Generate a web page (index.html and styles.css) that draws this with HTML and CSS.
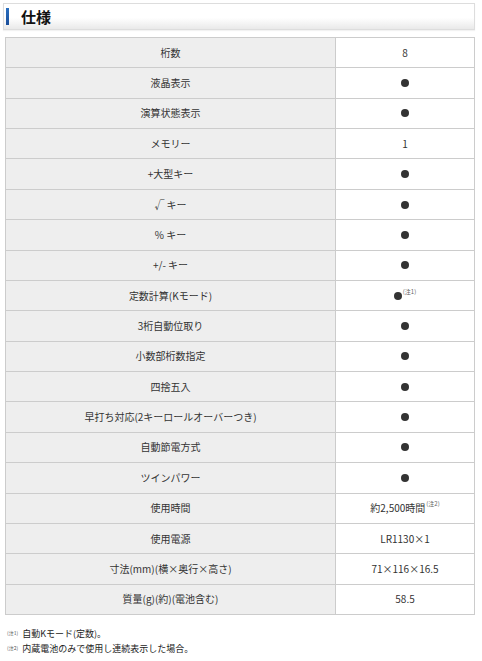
FILE: index.html
```html
<!DOCTYPE html>
<html lang="ja">
<head>
<meta charset="utf-8">
<link rel="stylesheet" href="styles.css">
</head>
<body>
<div class="page">
  <div class="heading"><span class="bar"></span><h2>仕様</h2></div>
  <div class="spec">
    <div class="k">桁数</div><div class="v">8</div>
    <div class="k">液晶表示</div><div class="v"><span class="dot"></span></div>
    <div class="k">演算状態表示</div><div class="v"><span class="dot"></span></div>
    <div class="k">メモリー</div><div class="v">1</div>
    <div class="k">+大型キー</div><div class="v"><span class="dot"></span></div>
    <div class="k">√ キー</div><div class="v"><span class="dot"></span></div>
    <div class="k">% キー</div><div class="v"><span class="dot"></span></div>
    <div class="k">+/- キー</div><div class="v"><span class="dot"></span></div>
    <div class="k">定数計算(Kモード)</div><div class="v"><span class="dot"></span><sup class="note">(注1)</sup></div>
    <div class="k">3桁自動位取り</div><div class="v"><span class="dot"></span></div>
    <div class="k">小数部桁数指定</div><div class="v"><span class="dot"></span></div>
    <div class="k">四捨五入</div><div class="v"><span class="dot"></span></div>
    <div class="k">早打ち対応(2キーロールオーバーつき)</div><div class="v"><span class="dot"></span></div>
    <div class="k">自動節電方式</div><div class="v"><span class="dot"></span></div>
    <div class="k">ツインパワー</div><div class="v"><span class="dot"></span></div>
    <div class="k">使用時間</div><div class="v">約2,500時間<sup class="note">(注2)</sup></div>
    <div class="k">使用電源</div><div class="v">LR1130×1</div>
    <div class="k">寸法(mm)(横×奥行×高さ)</div><div class="v">71×116×16.5</div>
    <div class="k">質量(g)(約)(電池含む)</div><div class="v">58.5</div>
  </div>
  <ul class="notes">
    <li><span class="mark">(注1)</span>自動Kモード(定数)。</li>
    <li><span class="mark">(注2)</span>内蔵電池のみで使用し連続表示した場合。</li>
  </ul>
</div>
</body>
</html>
```
FILE: styles.css
```css
* { box-sizing: border-box; }
html, body { margin: 0; padding: 0; background: #fff; }
body {
  font-family: "Noto Sans CJK JP", "Noto Sans", sans-serif;
  color: #333;
  font-size: 10px;
}
.page { padding: 3px 7px 0 3px; }
.heading {
  height: 27px;
  border: 1px solid #ddd;
  background: linear-gradient(#fff 0%, #fff 55%, #e9e9e9 100%);
  display: flex;
  align-items: center;
  padding-left: 2px;
  box-shadow: 0 1px 1px rgba(0,0,0,0.05);
}
.bar {
  width: 3px;
  height: 17px;
  background: linear-gradient(#2a6fc0, #1a4e9a);
  margin-right: 12px;
}
.heading h2 {
  margin: 0;
  font-size: 15px;
  font-weight: bold;
  color: #111;
  line-height: 1;
}
.spec {
  margin: 7px 0 0 2px;
  height: 578px;
  display: grid;
  grid-template-columns: 329px 1fr;
  grid-template-rows: repeat(19, 1fr);
  gap: 1px;
  background: #cccccc;
  border: 1px solid #cccccc;
}
.k, .v {
  display: flex;
  align-items: center;
  justify-content: center;
  line-height: 1;
}
.k { background: #eeeeee; }
.v { background: #ffffff; }
.dot {
  display: inline-block;
  width: 8px;
  height: 8px;
  border-radius: 50%;
  background: #333;
}
.note {
  font-size: 6px;
  color: #666;
  vertical-align: top;
  position: relative;
  top: -4px;
  margin-left: 1px;
}
.notes {
  list-style: none;
  margin: 11px 0 0 0;
  padding: 0 0 0 4px;
  font-size: 9px;
  line-height: 15px;
  color: #222;
}
.mark {
  font-size: 5px;
  color: #555;
  vertical-align: top;
  margin-right: 4px;
  position: relative;
  top: -1px;
}
```
